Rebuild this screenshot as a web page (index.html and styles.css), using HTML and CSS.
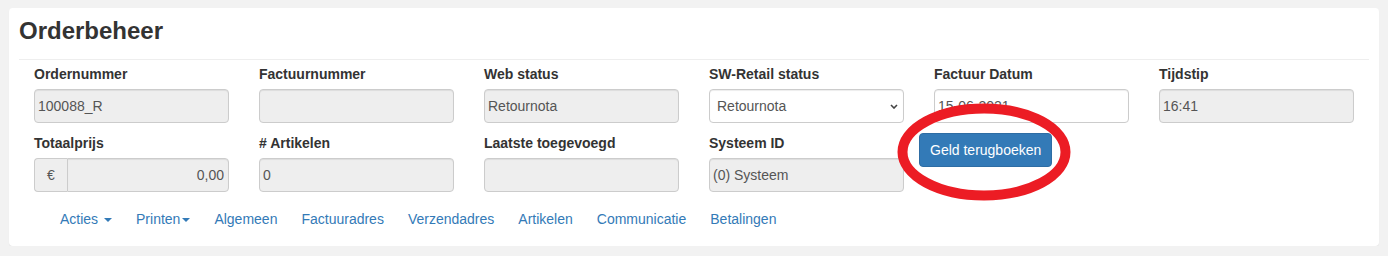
FILE: index.html
```html
<!DOCTYPE html>
<html lang="nl">
<head>
  <meta charset="UTF-8" />
  <meta name="viewport" content="width=device-width, initial-scale=1.0"/>
  <title>Orderbeheer</title>
  <link rel="stylesheet" href="styles.css">
</head>
<body>
  <div class="panel">
    <h1 class="title">Orderbeheer</h1>
    <hr/>

    <div class="fields">
      <div class="field">
        <label for="ordernr">Ordernummer</label>
        <input type="text" id="ordernr" value="100088_R" readonly/>
      </div>
      <div class="field">
        <label for="factuurnr">Factuurnummer</label>
        <input type="text" id="factuurnr" readonly/>
      </div>
      <div class="field">
        <label for="webstatus">Web status</label>
        <input type="text" id="webstatus" value="Retournota" readonly/>
      </div>
      <div class="field">
        <label for="swstatus">SW-Retail status</label>
        <div class="select-wrap">
          <select id="swstatus">
            <option>Retournota</option>
          </select>
          <svg class="chevron" width="8" height="5" viewBox="0 0 8 5"><path d="M1 1 L4 4 L7 1" fill="none" stroke="#444" stroke-width="1.6"/></svg>
        </div>
      </div>
      <div class="field">
        <label for="datum">Factuur Datum</label>
        <input type="text" id="datum" class="editable" value="15-06-2021"/>
      </div>
      <div class="field">
        <label for="tijd">Tijdstip</label>
        <input type="text" id="tijd" value="16:41" readonly/>
      </div>

      <div class="field">
        <label for="totaal">Totaalprijs</label>
        <div class="input-group">
          <span class="addon">€</span>
          <input type="text" id="totaal" class="amount" value="0,00" readonly/>
        </div>
      </div>
      <div class="field">
        <label for="artikelen"># Artikelen</label>
        <input type="text" id="artikelen" value="0" readonly/>
      </div>
      <div class="field">
        <label for="laatste">Laatste toegevoegd</label>
        <input type="text" id="laatste" readonly/>
      </div>
      <div class="field">
        <label for="systeem">Systeem ID</label>
        <input type="text" id="systeem" value="(0) Systeem" readonly/>
      </div>
      <div class="field action">
        <button class="btn-primary">Geld terugboeken</button>
      </div>
    </div>

    <ul class="nav">
      <li><a href="#">Acties <span class="caret"></span></a></li>
      <li><a href="#">Printen<span class="caret"></span></a></li>
      <li><a href="#">Algemeen</a></li>
      <li><a href="#">Factuuradres</a></li>
      <li><a href="#">Verzendadres</a></li>
      <li><a href="#">Artikelen</a></li>
      <li><a href="#">Communicatie</a></li>
      <li><a href="#">Betalingen</a></li>
    </ul>

    <!-- highlight marker drawn over the form -->
    <svg class="marker" width="184" height="108" viewBox="0 0 184 108">
      <ellipse cx="92" cy="54" rx="81.5" ry="43.5" fill="none" stroke="#ec1c24" stroke-width="10"/>
    </svg>
  </div>
</body>
</html>
```

FILE: styles.css
```css
body {
  margin: 0;
  background-color: #f2f2f2;
  font-family: "Liberation Sans", Arial, sans-serif;
  font-size: 14px;
  color: #333;
}
.panel {
  position: relative;
  margin: 8px 9px 0 9px;
  padding: 10px 10px 7px 10px;
  background-color: #fff;
  border-radius: 4px;
  box-shadow: 0 1px 1px rgba(0,0,0,0.06);
}
.title {
  margin: 0;
  font-size: 24px;
  line-height: 26px;
  font-weight: bold;
  color: #333;
}
hr {
  margin: 15px 0 4px 0;
  border: 0;
  border-top: 1px solid #eee;
}
.fields {
  display: grid;
  grid-template-columns: repeat(6, 1fr);
  row-gap: 10px;
}
.field {
  padding: 0 15px;
}
.field.action {
  padding-left: 0;
}
label {
  display: block;
  font-weight: bold;
  line-height: 20px;
  margin-bottom: 5px;
}
input[type="text"], select {
  display: block;
  box-sizing: border-box;
  width: 100%;
  height: 34px;
  padding: 0 4px 0 3px;
  font-family: inherit;
  font-size: 14px;
  color: #555;
  background-color: #eee;
  border: 1px solid #ccc;
  border-radius: 4px;
  box-shadow: inset 0 1px 1px rgba(0,0,0,0.075);
  outline: none;
}
input.editable {
  background-color: #fff;
}
.select-wrap {
  position: relative;
}
select {
  appearance: none;
  -webkit-appearance: none;
  padding-left: 7px;
  background-color: #fff;
}
.chevron {
  position: absolute;
  right: 6px;
  top: 15px;
  pointer-events: none;
}
.input-group {
  display: flex;
}
.addon {
  box-sizing: border-box;
  width: 33px;
  height: 34px;
  line-height: 32px;
  text-align: center;
  color: #555;
  background-color: #eee;
  border: 1px solid #ccc;
  border-right: 0;
  border-radius: 4px 0 0 4px;
}
.input-group input.amount {
  flex: 1;
  text-align: right;
  border-radius: 0 4px 4px 0;
}
.btn-primary {
  height: 34px;
  padding: 0 10px;
  font-family: inherit;
  font-size: 14px;
  color: #fff;
  background-color: #337ab7;
  border: 1px solid #2e6da4;
  border-radius: 4px;
  cursor: pointer;
}
.nav {
  display: flex;
  list-style: none;
  margin: 7px 0 0 0;
  padding: 0 0 0 29px;
}
.nav a {
  display: block;
  padding: 10px 12px;
  line-height: 20px;
  color: #337ab7;
  text-decoration: none;
}
.caret {
  display: inline-block;
  width: 0;
  height: 0;
  margin-left: 2px;
  vertical-align: middle;
  border-top: 4px solid;
  border-left: 4px solid transparent;
  border-right: 4px solid transparent;
}
.marker {
  position: absolute;
  left: 883px;
  top: 90px;
  pointer-events: none;
}
```
